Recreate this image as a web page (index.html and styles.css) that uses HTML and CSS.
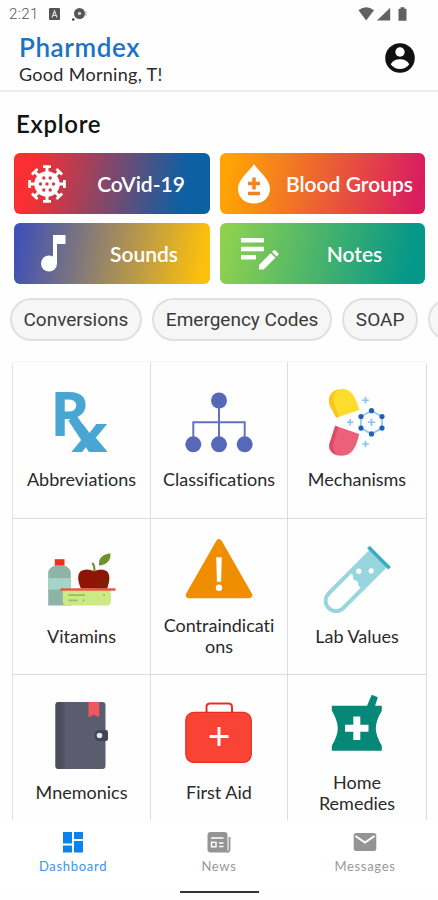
FILE: index.html
```html
<!DOCTYPE html>
<html lang="en">
<head>
<meta charset="UTF-8">
<meta name="viewport" content="width=device-width, initial-scale=1.0">
<title>Pharmdex</title>
<link rel="stylesheet" href="styles.css">
</head>
<body>

<div class="app">
  <div class="status-bar">
    <span class="time">2:21</span>
    <svg class="status-app" width="11" height="12" viewBox="0 0 11 12"><rect width="11" height="12" rx="1" fill="#555"/><path d="M3 9.5L5.5 3L8 9.5M4 7.5h3" fill="none" stroke="#ddd" stroke-width="1.2"/></svg>
    <svg class="status-chat" width="16" height="13" viewBox="0 0 16 13"><circle cx="7.5" cy="5.5" r="5.5" fill="#555"/><circle cx="7.5" cy="5.5" r="1.7" fill="#ccc"/><circle cx="1.3" cy="11.5" r="1.2" fill="#333"/><path d="M14 3.5v4" stroke="#999"/></svg>
    <svg class="status-icons" width="50" height="14" viewBox="0 0 50 14" fill="#616161"><path d="M0.5 3.2Q8.2-2.8 16 3.2L8.2 13.5z"/><path d="M32.2 0.8V13.6H19z"/><path d="M42.5 0.3h4v1.4h2v12h-8v-12h2z"/></svg>
  </div>

  <div class="header">
    <div>
      <div class="brand">Pharmdex</div>
      <div class="greeting">Good Morning, T!</div>
    </div>
    <svg class="account" width="30" height="30" viewBox="0 0 30 30"><circle cx="15" cy="15" r="14.8" fill="#111"/><circle cx="15" cy="9" r="4.7" fill="#fff"/><path d="M5.7 21.2C8 17.3 11.5 16.2 15 16.2s7 1.1 9.3 5C22 24.4 19 26 15 26s-7-1.6-9.3-4.8z" fill="#fff"/></svg>
  </div>

  <h1 class="title">Explore</h1>

  <div class="explore">
    <div class="tile covid">
      <svg width="38" height="38" viewBox="-19 -19 38 38" fill="#fff">
        <circle r="12.7"/>
        <g id="spikes"><path d="M-1.5-12h3v-4h2.5v-2.8h-8v2.8h2.5z"/><path d="M-1.5 12h3v4h2.5v2.8h-8V16h2.5z"/><path d="M12-1.5v3h4v2.5h2.8v-8H16v2.5z"/><path d="M-12-1.5v3h-4v2.5h-2.8v-8h2.8v2.5z"/></g>
        <use href="#spikes" transform="rotate(45)"/>
        <g fill="#d83b4a"><circle r="1.7"/><circle cx="-6.5" r="1.7"/><circle cx="6.5" r="1.7"/><circle cx="-3.2" cy="-6" r="1.7"/><circle cx="3.2" cy="-6" r="1.7"/><circle cx="-3.2" cy="6" r="1.7"/><circle cx="3.2" cy="6" r="1.7"/></g>
      </svg>
      <span>CoVid-19</span>
    </div>
    <div class="tile blood">
      <svg width="32" height="40" viewBox="0 0 32 40"><path d="M16 0C12.5 6 0 15 0 24.5C0 33.5 7 39.5 16 39.5S32 33.5 32 24.5C32 15 19.5 6 16 0z" fill="#fff"/><path d="M16 13.5v12M10 19.5h12M10 29.5h12" stroke="#f58220" stroke-width="3.5"/></svg>
      <span>Blood Groups</span>
    </div>
    <div class="tile sounds">
      <svg width="25" height="37" viewBox="0 0 25 37" fill="#fff"><circle cx="8" cy="28.5" r="8"/><path d="M12 0h12.5v9H16v19.5h-4z"/></svg>
      <span>Sounds</span>
    </div>
    <div class="tile notes">
      <svg width="38" height="32" viewBox="0 0 38 32" fill="#fff"><path d="M0 0h23v4.5H0zM0 8.7h23v4.5H0zM0 17h15v4.5H0z"/><path d="M18 27L29.8 15.2l4.6 4.6L22.6 31.6H18zM31 14l1.5-1.5q1-.8 2 0l2.6 2.6q.8 1 0 2l-1.5 1.5z"/></svg>
      <span>Notes</span>
    </div>
  </div>

  <div class="chips">
    <div class="chip">Conversions</div>
    <div class="chip">Emergency Codes</div>
    <div class="chip">SOAP</div>
    <div class="chip chip-cut"></div>
  </div>

  <div class="grid">
    <div class="cell">
      <svg viewBox="0 0 70 70" class="rx"><text x="3" y="47" font-size="61">R<tspan x="24" y="63" font-size="52" textLength="37" lengthAdjust="spacingAndGlyphs">x</tspan></text><path d="M21 31h11L53 63H42z"/></svg>
      <span>Abbreviations</span>
    </div>
    <div class="cell">
      <svg viewBox="0 0 70 70"><path d="M35 11v44M9.3 55V33.3h51.4V55" fill="none" stroke="#6571bd" stroke-width="2"/><g fill="#5868b8"><circle cx="35" cy="11.5" r="8"/><circle cx="9.3" cy="55.3" r="8"/><circle cx="35" cy="55.3" r="8"/><circle cx="60.7" cy="55.3" r="8"/></g></svg>
      <span>Classifications</span>
    </div>
    <div class="cell">
      <svg viewBox="0 0 70 70">
        <path d="M14.2 28.7L8 17C4 7 12 0 20 0c9 0 13.5 7 17.2 21z" fill="#fddc2e"/><path d="M14.2 28.7L8 17C4.5 8 10 1.5 16 .4C11 5 10.500 10 12.5 16l4.7 11.7z" fill="#fbc51c"/>
        <path d="M13.2 36.7l24 8.3C34 59 30 66.7 20 66.7S5 60 8 53z" fill="#ec6079"/><path d="M13.2 36.7l3.3 1.2L12 53c-1.5 6 0 10.5 4 13.4C9 65 5.5 59 8 53z" fill="#dc4c69"/>
        <path d="M49.5 21.7l10.5 5.8v11.6l-10.5 5.8-10.500-5.8V27.5z" fill="none" stroke="#8fcaf5" stroke-width="1.8"/>
        <g fill="#2260b4"><circle cx="49.5" cy="21.7" r="2.6"/><circle cx="60" cy="27.5" r="2.6"/><circle cx="60" cy="39.1" r="2.6"/><circle cx="49.5" cy="44.9" r="2.6"/><circle cx="39" cy="39.1" r="2.6"/><circle cx="39" cy="27.5" r="2.6"/></g>
        <path d="M43.5 8v6.6M40.2 11.3h6.6M28.2 30v6.6M24.9 33.3h6.6M49.5 29.5v7.6M45.7 33.3h7.6M43.5 51.7v6.6M40.2 55h6.6" stroke="#83c3f3" stroke-width="1.6"/>
      </svg>
      <span>Mechanisms</span>
    </div>
    <div class="cell">
      <svg viewBox="0 0 70 70">
        <path d="M1.2 59.5V27q0-5 6.6-7.5h9.7q6.300 2.5 6.3 7.5v32.5z" fill="#8fb3a7"/><path d="M1.2 32.2h22.6v11.3H1.2z" fill="#a5d5c6"/><path d="M7.8 13.2h9.7v6.3H7.8z" fill="#f22d1b"/>
        <path d="M47 25q8-3 12.5 0c4 3 3.5 10 .5 17.5H34C30.5 35 30 28 34 25q5-3 13 0z" fill="#8e1506"/><path d="M62 30q0 6-2 12.5H46z" fill="#7c2008"/>
        <path d="M45.3 17q2.7 3 2 8.5" fill="none" stroke="#718a2b" stroke-width="2"/><path d="M52 19.5C51 12 56 8 63.5 7.5C64 15 59 19 52 19.5z" fill="#6f922d"/>
        <path d="M15.8 44h48v11.5q0 4-4 4h-40q-4 0-4-4z" fill="#cbea84"/><path d="M13.5 42.3h55v2.5h-55z" fill="#e95748"/><path d="M21.5 49.2h16.5M21.5 54.3h9M35.5 54.3h2M56 49.2h2" stroke="#9dbb68" stroke-width="1.8"/>
      </svg>
      <span>Vitamins</span>
    </div>
    <div class="cell">
      <svg viewBox="0 0 70 70"><path d="M35 7.5L65 60H5z" fill="#ef8e00" stroke="#ef8e00" stroke-width="6.5" stroke-linejoin="round"/><path d="M32.2 22.3h5.6l-.7 24.4h-4.2z" fill="#fff"/><circle cx="35" cy="52.7" r="3.2" fill="#fff"/></svg>
      <span>Contraindicati<br>ons</span>
    </div>
    <div class="cell">
      <svg viewBox="0 0 70 70">
        <g transform="translate(57 11.7) rotate(45)">
          <path d="M-12.3 0h24.6v60.8a12.3 12.3 0 0 1-24.6 0z" fill="#98d6df"/>
          <path d="M-8.3 31q1.5-1 3 .5q2 3 5 1q3-1 5 1.5q1.5 1 3.6 0v27a8.3 8.3 0 0 1-16.6 0z" fill="#fff"/>
          <path d="M-15 0h30" stroke="#38adc1" stroke-width="3.6"/>
        </g>
        <circle cx="36.8" cy="25.2" r="2.6" fill="#fff"/><circle cx="49.2" cy="24.8" r="2.6" fill="#fff"/>
      </svg>
      <span>Lab Values</span>
    </div>
    <div class="cell">
      <svg viewBox="0 0 70 70">
        <rect x="8.5" width="50" height="67" rx="3" fill="#5b5d6e"/><path d="M11.5 0h2.5v67h-2.5q-3 0-3-3V3q0-3 3-3z" fill="#4a4c5b"/><path d="M14 0h3.5v67H14z" fill="#505263"/>
        <path d="M41.5 0h10.700v15.200l-5.300-2.500-5.400 2.500z" fill="#f0565c"/><path d="M53 28h6q2 0 2 2v7q0 2-2 2h-6a5.500 5.500 0 0 1 0-11z" fill="#424453"/><circle cx="52.5" cy="33.5" r="2.8" fill="#dfe7f4"/>
      </svg>
      <span>Mnemonics</span>
    </div>
    <div class="cell">
      <svg viewBox="0 0 70 70"><path d="M22.5 11V5q0-3.5 3.5-3.5h18.5q3.5 0 3.5 3.5v6" fill="none" stroke="#e92f24" stroke-width="2"/><rect x="1.8" y="10.3" width="65.5" height="50" rx="8" fill="#f94335" stroke="#e82c20" stroke-width="1.2"/><path d="M35 25v19M25.5 34.5h19" stroke="#fff" stroke-width="3"/></svg>
      <span>First Aid</span>
    </div>
    <div class="cell">
      <svg viewBox="0 0 70 70" fill="#078777"><path d="M9.8 13.7h50v5q-6 10-6 17.6t6 17.4v5h-50v-5q6-9.8 6-17.4t-6-17.6z"/><path d="M44.8 14.5L48.5 5.5L49.8 2.8l6 2.5-1 3.2-2 6z"/><path d="M34.8 24.6V48M23.1 36.3h23.4" stroke="#fff" stroke-width="7"/></svg>
      <span>Home<br>Remedies</span>
    </div>
  </div>

  <div class="nav">
    <div class="nav-item active">
      <svg width="24" height="22" viewBox="0 0 24 22" fill="#0a84ea"><path d="M2 1h9v11.5H2zM13 1h9v7h-9zM2 14.5h9v7H2zM13 10h9v11.5h-9z"/></svg>
      <span>Dashboard</span>
    </div>
    <div class="nav-item">
      <svg width="24" height="22" viewBox="0 0 24 22"><rect x=".5" y="1" width="20" height="20.5" rx="3" fill="#949494"/><path d="M22.5 6v12.500q0 2.500-3 2.500" fill="none" stroke="#949494" stroke-width="1.8"/><path d="M4 7h12.5M12 12h4.5M12 15.5h4.5" stroke="#fff" stroke-width="1.7"/><rect x="4.5" y="11.3" width="4.5" height="4.5" fill="none" stroke="#fff" stroke-width="1.5"/></svg>
      <span>News</span>
    </div>
    <div class="nav-item">
      <svg width="24" height="22" viewBox="0 0 24 22"><rect x=".7" y="2" width="22.6" height="18" rx="2.5" fill="#949494"/><path d="M2.5 5L12 11.5L21.5 5" fill="none" stroke="#fff" stroke-width="2"/></svg>
      <span>Messages</span>
    </div>
  </div>
  <div class="home-bar"></div>
</div>

</body>
</html>
```

FILE: styles.css
```css
* {
  box-sizing: border-box;
}

body {
  margin: 0;
  background: #fefefe;
  font-family: Lato, "Liberation Sans", sans-serif;
  font-variant-ligatures: none;
  color: #2a2a2a;
}

svg {
  display: block;
  flex: none;
}

.app {
  width: 438px;
  height: 900px;
  display: flex;
  flex-direction: column;
  overflow: hidden;
}

.status-bar {
  height: 28px;
  display: flex;
  align-items: center;
  padding: 0 30px 0 9px;
  flex: none;
}

.time {
  width: 40px;
  font-family: Roboto, sans-serif;
  font-size: 15px;
  font-weight: 300;
  letter-spacing: 0.4px;
  color: #555;
}

.status-chat {
  margin-left: 12px;
}

.status-icons {
  margin-left: auto;
}

.header {
  height: 64px;
  display: flex;
  justify-content: space-between;
  padding: 4px 23px 0 19px;
  border-bottom: 2px solid #ebebeb;
  flex: none;
}

.brand {
  font-size: 26px;
  line-height: 31px;
  font-weight: 600;
  letter-spacing: 0.6px;
  color: #1c73c4;
}

.greeting {
  font-size: 18px;
  line-height: 23px;
  letter-spacing: 0.3px;
}

.account {
  margin-top: 11px;
}

.title {
  margin: 17px 0 14px 16px;
  font-size: 24px;
  line-height: 30px;
  font-weight: 600;
  letter-spacing: 0.7px;
  color: #111;
}

.explore {
  display: grid;
  grid-template-columns: 196px 205px;
  grid-auto-rows: 61px;
  gap: 9px 10px;
  padding-left: 14px;
}

.tile {
  display: flex;
  align-items: center;
  border-radius: 6px;
  font-size: 21px;
  font-weight: 600;
  color: #fff;
}

.tile span {
  flex: 1;
  text-align: center;
  white-space: nowrap;
}

.covid {
  padding-left: 14px;
  background: linear-gradient(100deg, #f92f32 10%, #0d60a2 85%);
}

.covid span {
  padding-left: 6px;
}

.blood {
  padding-left: 18px;
  background: linear-gradient(100deg, #ffa404 5%, #d91e60 95%);
}

.blood span {
  padding-left: 4px;
}

.sounds {
  padding-left: 27px;
  background: linear-gradient(100deg, #3f51b5 3%, #fcc00c 95%);
}

.sounds span {
  padding-left: 12px;
}

.notes {
  padding-left: 21px;
  background: linear-gradient(100deg, #8fd14f 3%, #059788 92%);
}

.notes span {
  padding-left: 5px;
}

.chips {
  display: flex;
  gap: 9.5px;
  padding: 14px 0 0 9.5px;
  margin-bottom: 20px;
}

.chip {
  height: 43px;
  padding: 0 12px;
  border: 2px solid #e0e0e0;
  border-radius: 22px;
  background: #f6f6f6;
  font-family: Roboto, sans-serif;
  font-size: 19px;
  line-height: 39px;
  color: #3a3a3a;
  white-space: nowrap;
  flex: none;
}

.chip-cut {
  width: 90px;
}

.grid {
  flex: 1;
  min-height: 0;
  margin: 0 11px 0 12px;
  display: grid;
  grid-template-columns: 138px 137px 139px;
  grid-auto-rows: 156.5px;
  border-left: 1px solid #e4e4e4;
  border-top: 1px solid #f5f5f5;
  border-radius: 4px 4px 0 0;
  overflow: hidden;
}

.cell {
  display: flex;
  flex-direction: column;
  align-items: center;
  justify-content: center;
  gap: 10px;
  border-right: 1px solid #dcdcdc;
  border-bottom: 1px solid #dcdcdc;
  font-size: 18px;
  line-height: 21px;
  text-align: center;
}

.cell svg {
  width: 70px;
  height: 70px;
}

.rx {
  font-family: "Open Sans", sans-serif;
  font-weight: bold;
  fill: #47a6d2;
  overflow: visible;
}

.nav {
  height: 71px;
  display: flex;
  padding-top: 11px;
  background: #fff;
  flex: none;
}

.nav-item {
  flex: 1;
  display: flex;
  flex-direction: column;
  align-items: center;
  gap: 5px;
  font-size: 13px;
  line-height: 16px;
  letter-spacing: 0.7px;
  color: #999;
}

.active {
  color: #3b93ee;
}

.home-bar {
  width: 79px;
  height: 2px;
  margin: 0 auto 7px;
  background: #333;
  flex: none;
}
```
